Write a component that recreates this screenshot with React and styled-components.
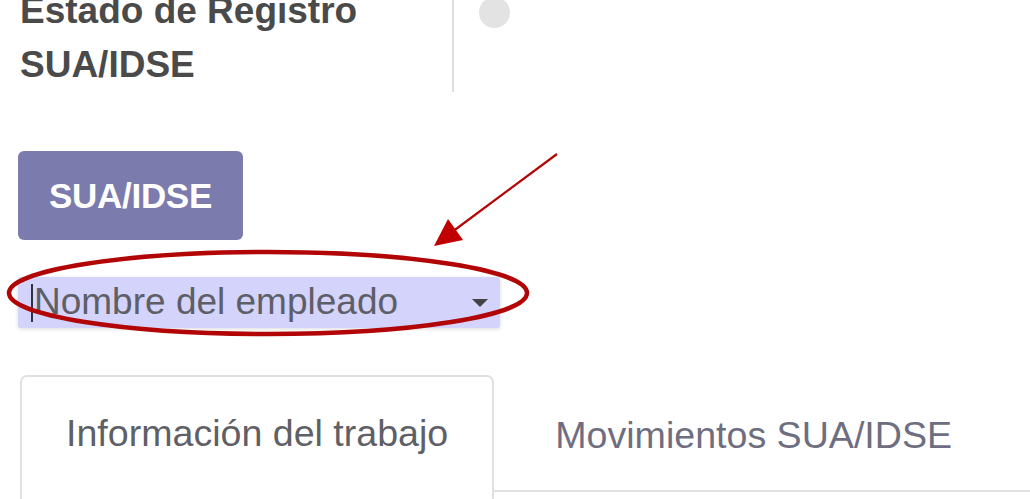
import styled, { createGlobalStyle } from "styled-components";

const GlobalStyle = createGlobalStyle`
  html, body {
    margin: 0;
    padding: 0;
    background: #ffffff;
    overflow: hidden;
  }
  body {
    font-family: "Liberation Sans", Arial, sans-serif;
  }
`;

const Page = styled.div`
  position: relative;
  width: 1030px;
  height: 499px;
  overflow: hidden;
  padding-left: 20px;
  box-sizing: border-box;
`;

const Header = styled.div`
  display: flex;
  align-items: flex-start;
  height: 92px;
`;

const Title = styled.h2`
  margin: -16px 0 0 0;
  width: 432px;
  font-size: 37px;
  line-height: 54px;
  font-weight: bold;
  color: #4a4a4a;
`;

const Divider = styled.div`
  align-self: stretch;
  width: 2px;
  background: #dedede;
`;

const StatusDot = styled.span`
  margin: -3px 0 0 25px;
  width: 31px;
  height: 31px;
  border-radius: 50%;
  background: #e3e3e3;
`;

const ActionButton = styled.button`
  display: block;
  margin: 59px 0 0 -2px;
  width: 225px;
  height: 89px;
  border: none;
  border-radius: 6px;
  background: #7c7bad;
  color: #ffffff;
  font-family: "Liberation Sans", Arial, sans-serif;
  font-size: 35px;
  font-weight: bold;
  letter-spacing: -0.3px;
`;

const SelectField = styled.div`
  display: flex;
  align-items: center;
  margin: 37px 0 0 -2px;
  width: 482px;
  height: 51px;
  padding: 0 10px 0 13px;
  box-sizing: border-box;
  background: #d3d3fb;
  border-radius: 3px;
  box-shadow: 0 1px 4px rgba(0, 0, 0, 0.14);
`;

const Caret = styled.span`
  width: 2px;
  height: 38px;
  background: #2f3340;
  margin-right: 1px;
`;

const Placeholder = styled.span`
  flex: 1;
  font-size: 37px;
  color: #5e5e66;
  line-height: 1;
  margin-top: -3px;
`;

const DropArrow = styled.span`
  width: 0;
  height: 0;
  border-left: 8px solid transparent;
  border-right: 8px solid transparent;
  border-top: 8px solid #444;
  margin-right: 2px;
`;

const TabBar = styled.div`
  display: flex;
  margin: 47px -20px 0 0;
  height: 115px;
  border-bottom: 2px solid #e2e2e2;
`;

const Tab = styled.div`
  box-sizing: border-box;
  padding: ${(p) => (p.active ? "35px 44px 0 44px" : "37px 0 0 59px")};
  font-size: 37.6px;
  color: ${(p) => (p.active ? "#5f5f66" : "#6e6e80")};
  background: #ffffff;
  border: 2px solid ${(p) => (p.active ? "#e0e0e0" : "transparent")};
  border-bottom: none;
  border-radius: 7px 7px 0 0;
  height: ${(p) => (p.active ? "140px" : "115px")};
  white-space: nowrap;
`;

const Annotations = styled.svg`
  position: absolute;
  left: 0;
  top: 0;
  pointer-events: none;
`;

export default function App() {
  return (
    <>
      <GlobalStyle />
      <Page>
        <Header>
          <Title>
            Estado de Registro
            <br />
            SUA/IDSE
          </Title>
          <Divider />
          <StatusDot />
        </Header>
        <ActionButton>SUA/IDSE</ActionButton>
        <SelectField>
          <Caret />
          <Placeholder>Nombre del empleado</Placeholder>
          <DropArrow />
        </SelectField>
        <TabBar>
          <Tab active>Información del trabajo</Tab>
          <Tab>Movimientos SUA/IDSE</Tab>
        </TabBar>
        <Annotations width="1030" height="499" viewBox="0 0 1030 499">
          <ellipse
            cx="268"
            cy="293"
            rx="259"
            ry="41"
            fill="none"
            stroke="#b20606"
            strokeWidth="4.5"
          />
          <line x1="557" y1="154" x2="452" y2="232" stroke="#b20606" strokeWidth="2.2" />
          <polygon points="434,246 448,219 463,240" fill="#c00000" />
        </Annotations>
      </Page>
    </>
  );
}
